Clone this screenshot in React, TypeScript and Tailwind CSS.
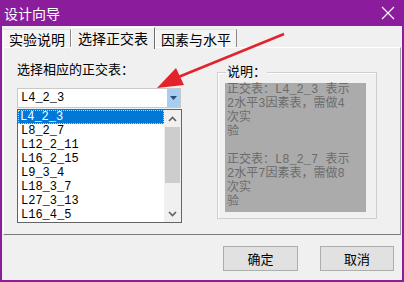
import React from 'react';

const tables = ['L4_2_3', 'L8_2_7', 'L12_2_11', 'L16_2_15', 'L9_3_4', 'L18_3_7', 'L27_3_13', 'L16_4_5'];

const noteLines = [
  '正交表：L4_2_3 表示',
  '2水平3因素表，需做4',
  '次实',
  '验',
  '',
  '正交表：L8_2_7 表示',
  '2水平7因素表，需做8',
  '次实',
  '验',
];

const ui = { fontFamily: '"Noto Sans CJK SC", "Noto Sans", sans-serif' };
const mono = { fontFamily: '"Liberation Mono", "Noto Sans CJK SC", monospace' };

function Tab({ label, active }: { label: string; active?: boolean }) {
  if (active) {
    return (
      <div className="h-[22px] px-[6px] mt-[0px] -mb-[1px] z-10 flex items-start pt-[1px] bg-[#f0f0f0] border-l border-t border-r border-l-white border-t-white border-r-[#6d6d6d] text-[14px] leading-[18px] text-black">
        {label}
      </div>
    );
  }
  return (
    <div className="h-[19px] mt-[3px] px-[5px] flex items-center bg-[#f4f4f4] border-l border-t border-r border-l-white border-t-[#e3e3e3] border-r-[#8a8a8a] text-[14px] leading-[18px] text-black">
      {label}
    </div>
  );
}

function Chevron({ up }: { up?: boolean }) {
  return (
    <svg width="9" height="6" viewBox="0 0 9 6">
      <path d={up ? 'M1 5 L4.5 1.5 L8 5' : 'M1 1 L4.5 4.5 L8 1'} stroke="#606060" strokeWidth="1.6" fill="none" />
    </svg>
  );
}

export default function App() {
  return (
    <div className="relative w-[404px] h-[282px] bg-[#8b1c9b] flex flex-col overflow-hidden" style={ui}>
      <div className="h-[26px] flex items-center justify-between pl-[4px] pr-[9px] text-white text-[14px]">
        <span>设计向导</span>
        <svg width="14" height="14" viewBox="0 0 14 14">
          <path d="M1 1 L13 13 M13 1 L1 13" stroke="white" strokeWidth="1.2" />
        </svg>
      </div>

      <div className="flex-1 mx-[2px] mb-[2px] bg-[#f0f0f0] flex flex-col">
        <div className="h-[21px] flex items-start pl-[1px]">
          <div className="mt-[0px] flex items-end">
            <Tab label="实验说明" />
            <Tab label="选择正交表" active />
            <Tab label="因素与水平" />
          </div>
        </div>

        <div className="h-[188px] mx-[1px] border border-t-white border-l-white border-r-[#a0a0a0] border-b-[#7a7a7a] bg-[#f0f0f0] flex">
          <div className="w-[178px] pl-[13px] flex flex-col">
            <div className="mt-[13px] text-[13px] leading-[16px] text-black">选择相应的正交表：</div>
            <div className="mt-[11px] h-[20px] w-[164px] bg-white border border-[#c9c9c9] flex items-center">
              <span className="flex-1 pl-[3px] text-[12px] text-black" style={mono}>L4_2_3</span>
              <div className="w-[13px] h-[18px] bg-[#a8cdf2] flex items-center justify-center">
                <svg width="7" height="4" viewBox="0 0 7 4">
                  <path d="M0 0 H7 L3.5 4 Z" fill="#2a4c78" />
                </svg>
              </div>
            </div>
            <div className="mt-[1px] h-[114px] w-[165px] bg-white border border-[#646464] flex">
              <div className="flex-1 flex flex-col">
                {tables.map((t, i) => (
                  <div
                    key={t}
                    className={
                      i === 0
                        ? 'h-[14px] pl-[2px] flex items-center bg-[#0078d7] text-white text-[12px] outline-1 outline-dotted outline-[#f5d65c] -outline-offset-1'
                        : 'h-[14px] pl-[3px] flex items-center text-black text-[12px]'
                    }
                    style={mono}
                  >
                    {t}
                  </div>
                ))}
              </div>
              <div className="w-[17px] bg-[#f0f0f0] flex flex-col">
                <div className="h-[17px] flex items-center justify-center">
                  <Chevron up />
                </div>
                <div className="h-[56px] mx-[1px] bg-[#cdcdcd]" />
                <div className="flex-1" />
                <div className="h-[17px] flex items-center justify-center">
                  <Chevron />
                </div>
              </div>
            </div>
          </div>

          <div className="ml-[35px] mt-[24px] relative w-[160px] h-[147px] border border-[#cfcfcf] shadow-[inset_1px_1px_0_#ffffff]">
            <span className="absolute left-[8px] -top-[10px] px-[1px] bg-[#f0f0f0] text-[13px] leading-[16px] text-black">说明：</span>
            <div className="mt-[10px] ml-[7px] w-[141px] h-[129px] bg-[#ababab] pl-[2px] pt-[0px] text-[12px] leading-[14px] text-[#6c6c6c]" style={mono}>
              {noteLines.map((l, i) => (
                <div key={i} className="h-[14px] whitespace-pre">{l}</div>
              ))}
            </div>
          </div>
        </div>

        <div className="flex-1 flex justify-end items-start pt-[11px] pr-[8px] gap-[22px]">
          <button className="w-[75px] h-[25px] bg-[#e1e1e1] border border-[#adadad] text-[13px] text-black">确定</button>
          <button className="w-[74px] h-[25px] bg-[#e1e1e1] border border-[#adadad] text-[13px] text-black">取消</button>
        </div>
      </div>

      <svg className="absolute left-0 top-0 pointer-events-none" width="404" height="282" viewBox="0 0 404 282">
        <line x1="284" y1="34" x2="176" y2="78" stroke="#e3232b" strokeWidth="2.5" />
        <polygon points="157,88 176,68 184,85" fill="#e3232b" />
      </svg>
    </div>
  );
}
